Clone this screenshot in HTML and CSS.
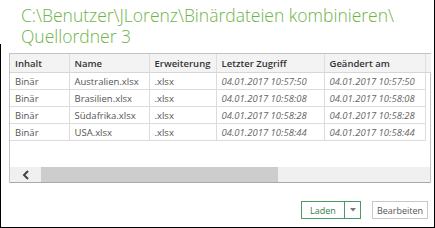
FILE: index.html
```html
<!DOCTYPE html>
<html lang="de">
<head>
<meta charset="utf-8">
<title>Quellordner 3</title>
<link rel="stylesheet" href="styles.css">
</head>
<body>
<div class="frame">
  <h1 class="title"><span class="tl">C:\Benutzer\JLorenz\Binärdateien kombinieren\</span><span class="tl">Quellordner 3</span></h1>
  <div class="body">
    <div class="grid">
      <table class="data">
        <colgroup>
          <col class="c1"><col class="c2"><col class="c3"><col class="c4"><col class="c5"><col class="c6">
        </colgroup>
        <thead>
          <tr><th>Inhalt</th><th>Name</th><th>Erweiterung</th><th>Letzter Zugriff</th><th>Geändert am</th><th class="fill"></th></tr>
        </thead>
        <tbody>
          <tr><td>Binär</td><td>Australien.xlsx</td><td>.xlsx</td><td class="dt">04.01.2017 10:57:50</td><td class="dt">04.01.2017 10:57:50</td><td class="fill"></td></tr>
          <tr><td>Binär</td><td>Brasilien.xlsx</td><td>.xlsx</td><td class="dt">04.01.2017 10:58:08</td><td class="dt">04.01.2017 10:58:08</td><td class="fill"></td></tr>
          <tr><td>Binär</td><td>Südafrika.xlsx</td><td>.xlsx</td><td class="dt">04.01.2017 10:58:28</td><td class="dt">04.01.2017 10:58:28</td><td class="fill"></td></tr>
          <tr><td>Binär</td><td>USA.xlsx</td><td>.xlsx</td><td class="dt">04.01.2017 10:58:44</td><td class="dt">04.01.2017 10:58:44</td><td class="fill"></td></tr>
        </tbody>
      </table>
      <div class="spacer"></div>
      <div class="hscroll">
        <div class="arrow"><svg width="8" height="10" viewBox="0 0 8 10"><path d="M6 1 L2 5 L6 9" fill="none" stroke="#444" stroke-width="2"/></svg></div>
        <div class="thumb"></div>
        <div class="track"></div>
      </div>
    </div>
    <div class="actions">
      <div class="split">
        <button class="btn-main">Laden</button>
        <button class="btn-drop"><svg width="6" height="4" viewBox="0 0 6 4"><path d="M0 0 H6 L3 3.5 Z" fill="#777"/></svg></button>
      </div>
      <button class="btn">Bearbeiten</button>
    </div>
  </div>
</div>
</body>
</html>
```

FILE: styles.css
```css
html, body {
  margin: 0;
  padding: 0;
  background: #fff;
}
.frame {
  width: 434px;
  height: 227px;
  border-right: 1px solid #000;
  border-bottom: 1px solid #000;
  display: flex;
  flex-direction: column;
  font-family: "Open Sans", "Noto Sans", sans-serif;
}
.title {
  margin: 0;
  padding: 5px 0 0 21px;
  height: 47px;
  flex: none;
  box-sizing: border-box;
  font-family: "Open Sans", sans-serif;
  font-weight: 300;
  font-size: 17.5px;
  line-height: 21px;
  color: #6fb34a;
  white-space: nowrap;
  display: flex;
  flex-direction: column;
}
.tl {
  display: block;
  height: 21px;
}
.body {
  flex: 1;
  border-left: 1px solid #000;
  margin-top: -3px;
  padding: 9px 3px 0 8px;
  display: flex;
  flex-direction: column;
}
.grid {
  border: 1px solid #c4c4c4;
  border-bottom-color: #a9a9a9;
  display: flex;
  flex-direction: column;
}
.data {
  border-collapse: collapse;
  table-layout: fixed;
  width: 421px;
  font-size: 9.5px;
}
.c1 { width: 59px; }
.c2 { width: 80px; }
.c3 { width: 67px; }
.c4 { width: 108px; }
.c5 { width: 101px; }
.c6 { width: 6px; }
.data th {
  background: #f3f3f3;
  height: 18px;
  text-align: left;
  font-weight: 600;
  color: #333;
  padding: 0 0 0 5px;
  border-right: 1px solid #dedede;
  border-bottom: 1px solid #d6d6d6;
  white-space: nowrap;
}
.data th.fill { border-right: none; }
.data td {
  height: 16px;
  padding: 0 0 0 5px;
  color: #555;
  border: 1px solid #dcdcdc;
  white-space: nowrap;
}
.data tr td:first-child { border-left: none; }
.data td.fill { border: none; }
.data td.dt {
  font-style: italic;
  color: #666;
}
.spacer { height: 26px; }
.hscroll {
  height: 15px;
  display: flex;
  background: #f0f0f0;
}
.arrow {
  width: 31px;
  display: flex;
  align-items: center;
  justify-content: center;
}
.thumb {
  width: 237px;
  background: #cdcdcd;
}
.track { flex: 1; }
.actions {
  display: flex;
  justify-content: flex-end;
  align-items: center;
  gap: 11px;
  padding: 18px 3px 0 0;
}
.split {
  display: flex;
  border: 1px solid #4a9a66;
  height: 16px;
}
.split button, .btn {
  font-family: "Open Sans", sans-serif;
  font-size: 9px;
  background: #fff;
  margin: 0;
  padding: 0;
}
.btn-main {
  width: 43px;
  border: none;
  border-right: 1px solid #4a9a66;
  color: #2f7d4a;
}
.btn-drop {
  width: 15px;
  border: none;
  display: flex;
  align-items: center;
  justify-content: center;
}
.btn {
  width: 56px;
  height: 18px;
  border: 1px solid #c8c8c8;
  color: #555;
}
```
